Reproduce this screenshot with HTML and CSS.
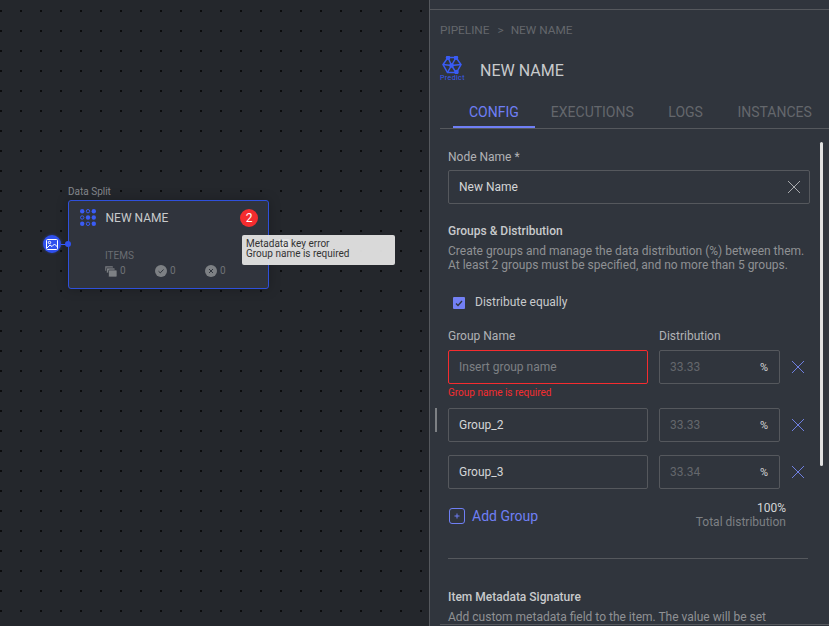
FILE: index.html
```html
<!DOCTYPE html>
<html lang="en">
<head>
    <meta charset="UTF-8">
    <meta name="viewport" content="width=device-width, initial-scale=1.0">
    <title>Pipeline - New Name</title>
    <link rel="stylesheet" href="styles.css">
</head>
<body>
    <div class="canvas">
        <div class="node-label">Data Split</div>
        <div class="node">
            <div class="node-head">
                <svg class="node-icon" width="16" height="17" viewBox="0 0 16 17" fill="#3a5cf5" stroke="#3a5cf5">
                    <circle cx="2.200" cy="2.200" r="2.200" stroke="none"/>
                    <circle cx="8" cy="2.200" r="1.700" fill="none" stroke-width="1"/>
                    <circle cx="13.800" cy="2.200" r="2.200" stroke="none"/>
                    <circle cx="2.200" cy="8.500" r="1.700" fill="none" stroke-width="1"/>
                    <circle cx="8" cy="8.500" r="2.200" stroke="none"/>
                    <circle cx="13.800" cy="8.500" r="2.200" stroke="none"/>
                    <circle cx="2.200" cy="14.800" r="2.200" stroke="none"/>
                    <circle cx="8" cy="14.800" r="1.700" fill="none" stroke-width="1"/>
                    <circle cx="13.800" cy="14.800" r="2.200" stroke="none"/>
                </svg>
                <span class="node-name">NEW NAME</span>
                <span class="node-badge">2</span>
            </div>
            <div class="node-items">ITEMS</div>
            <div class="node-stats">
                <span class="stat">
                    <svg width="12" height="11" viewBox="0 0 12 11" fill="#7d8084">
                        <rect x="0" y="0" width="8" height="5" rx="1" opacity=".7"/>
                        <rect x="1.500" y="2" width="8.500" height="5" rx="1" stroke="#30353d" stroke-width=".7"/>
                        <rect x="3.500" y="4" width="8.500" height="7" rx="1" stroke="#30353d" stroke-width=".7"/>
                    </svg>
                    0
                </span>
                <span class="stat">
                    <svg width="12" height="12" viewBox="0 0 12 12">
                        <circle cx="6" cy="6" r="6" fill="#7d8084"/>
                        <path d="M3.500 6.200l1.800 1.700 3.200-3.400" fill="none" stroke="#30353d" stroke-width="1"/>
                    </svg>
                    0
                </span>
                <span class="stat">
                    <svg width="12" height="12" viewBox="0 0 12 12">
                        <circle cx="6" cy="6" r="6" fill="#7d8084"/>
                        <path d="M4 4l4 4M8 4l-4 4" fill="none" stroke="#30353d" stroke-width="1"/>
                    </svg>
                    0
                </span>
            </div>
        </div>
        <div class="port-in">
            <svg width="12" height="11" viewBox="0 0 12 11" fill="none" stroke="#fff" stroke-width="1">
                <rect x=".5" y=".5" width="11" height="10" rx="1"/>
                <circle cx="3.500" cy="3.500" r="1.200"/>
                <path d="M1 9l3-3 2 1.500 2.500-2.500 3 3"/>
            </svg>
        </div>
        <div class="port-line"></div>
        <div class="port-dot"></div>
        <div class="port-out"></div>
        <div class="tooltip">Metadata key error<br>Group name is required</div>
    </div>

    <div class="panel">
        <div class="breadcrumb"><span>PIPELINE</span><span class="crumb-sep">&gt;</span><span>NEW NAME</span></div>
        <div class="panel-title">
            <div class="logo">
                <svg width="20" height="18" viewBox="0 0 20 18" fill="none" stroke="#3a5cf5" stroke-width="1.500">
                    <path d="M6 1.500h8l5 7-4.500 8h-9L1 8.500z"/>
                    <path d="M6 1.500l3.500 8 4.500 7M14 1.500l-4.500 8-4 7M1 8.500l8.500 1L19 8.500"/>
                    <circle cx="6" cy="1.800" r="1.500" fill="#3a5cf5"/>
                    <circle cx="14" cy="1.800" r="1.500" fill="#3a5cf5"/>
                    <circle cx="9.500" cy="9.500" r="1.600" fill="#3a5cf5"/>
                    <circle cx="14.500" cy="16" r="1.500" fill="#3a5cf5"/>
                </svg>
                <span class="logo-text">Predict</span>
            </div>
            <span class="title-text">NEW NAME</span>
        </div>
        <div class="tabs">
            <span class="tab active">CONFIG</span>
            <span class="tab">EXECUTIONS</span>
            <span class="tab">LOGS</span>
            <span class="tab">INSTANCES</span>
        </div>

        <div class="form">
            <label class="label name-label">Node Name *</label>
            <div class="field name-field">
                <span class="value">New Name</span>
                <svg width="14" height="14" viewBox="0 0 14 14" stroke="#a9abae" stroke-width="1"><path d="M1 1l12 12M13 1L1 13"/></svg>
            </div>

            <h2 class="heading groups-heading">Groups &amp; Distribution</h2>
            <p class="desc">Create groups and manage the data distribution (%) between them.<br>At least 2 groups must be specified, and no more than 5 groups.</p>

            <div class="check-row">
                <span class="checkbox">
                    <svg width="8" height="7" viewBox="0 0 8 7" fill="none" stroke="#30353d" stroke-width="1.300"><path d="M1 3.500l2 2 4-4.500"/></svg>
                </span>
                <span class="check-label">Distribute equally</span>
            </div>

            <div class="group-grid">
                <span class="label">Group Name</span>
                <span class="label">Distribution</span>
                <span></span>

                <div class="field error"><span class="placeholder">Insert group name</span></div>
                <div class="field dist"><span class="dist-value">33.33</span><span class="pct">%</span></div>
                <svg class="remove" width="14" height="14" viewBox="0 0 14 14" stroke="#6f7fe0" stroke-width="1"><path d="M1 1l12 12M13 1L1 13"/></svg>
                <div class="error-text">Group name is required</div>

                <div class="field"><span class="value">Group_2</span></div>
                <div class="field dist"><span class="dist-value">33.33</span><span class="pct">%</span></div>
                <svg class="remove" width="14" height="14" viewBox="0 0 14 14" stroke="#6f7fe0" stroke-width="1"><path d="M1 1l12 12M13 1L1 13"/></svg>
                <div class="row-gap"></div>

                <div class="field"><span class="value">Group_3</span></div>
                <div class="field dist"><span class="dist-value">33.34</span><span class="pct">%</span></div>
                <svg class="remove" width="14" height="14" viewBox="0 0 14 14" stroke="#6f7fe0" stroke-width="1"><path d="M1 1l12 12M13 1L1 13"/></svg>
            </div>

            <div class="add-row">
                <div class="add-group">
                    <svg width="16" height="16" viewBox="0 0 16 16" fill="none" stroke="#6f7ff5" stroke-width="1">
                        <rect x=".5" y=".5" width="15" height="15" rx="2.500"/>
                        <path d="M8 5.500v5M5.500 8h5"/>
                    </svg>
                    <span>Add Group</span>
                </div>
                <div class="total">
                    <div class="total-num">100%</div>
                    <div class="total-label">Total distribution</div>
                </div>
            </div>

            <div class="divider"></div>

            <h2 class="heading meta-heading">Item Metadata Signature</h2>
            <p class="desc">Add custom metadata field to the item. The value will be set</p>
        </div>

        <div class="drag-handle"></div>
        <div class="scrollbar"></div>
        <div class="bottom-line"></div>
    </div>
</body>
</html>
```

FILE: styles.css
```css
* {
    box-sizing: border-box;
}
body {
    margin: 0;
    display: flex;
    height: 626px;
    overflow: hidden;
    background: #24272c;
    font-family: Roboto, "Liberation Sans", sans-serif;
    color: #c8cacc;
}

/* canvas */
.canvas {
    position: relative;
    width: 429px;
    flex: none;
    background-color: #24272c;
    background-image: radial-gradient(circle at 1px 1px, #0b0c0e 1px, transparent 1.2px);
    background-size: 20px 20px;
    background-position: 0 10px;
}
.node-label {
    position: absolute;
    left: 68px;
    top: 186px;
    font-size: 10px;
    line-height: 12px;
    color: #85888c;
}
.node {
    position: absolute;
    left: 68px;
    top: 200px;
    width: 201px;
    height: 89px;
    padding: 8px 10px 0 11px;
    background: #30343d;
    border: 1.5px solid #2f50dc;
    border-radius: 3px;
    box-shadow: 0 0 12px rgba(0, 0, 0, 0.25);
}
.node-head {
    display: flex;
    align-items: center;
    height: 17px;
}
.node-name {
    margin-left: 9.500px;
    font-size: 12px;
    color: #c8cacc;
}
.node-badge {
    margin-left: auto;
    width: 18px;
    height: 18px;
    border-radius: 50%;
    background: #f52c2f;
    color: #fff;
    font-size: 12px;
    line-height: 18px;
    text-align: center;
}
.node-items {
    margin: 24px 0 0 25px;
    font-size: 10px;
    line-height: 12px;
    color: #6a6d72;
}
.node-stats {
    display: flex;
    margin: 3px 0 0 25px;
}
.stat {
    display: flex;
    align-items: center;
    gap: 3px;
    width: 50px;
    font-size: 10px;
    line-height: 12px;
    color: #6f7276;
}
.port-in {
    position: absolute;
    left: 43px;
    top: 235px;
    width: 18px;
    height: 18px;
    display: flex;
    align-items: center;
    justify-content: center;
    border-radius: 50%;
    background: #2f50ee;
    box-shadow: 0 0 3px rgba(58, 92, 245, 0.5);
}
.port-line {
    position: absolute;
    left: 61px;
    top: 244px;
    width: 7px;
    height: 1px;
    background: #3a5cf5;
}
.port-dot {
    position: absolute;
    left: 65px;
    top: 241px;
    width: 6px;
    height: 6px;
    border-radius: 50%;
    background: #2f50ee;
}
.port-out {
    position: absolute;
    left: 278px;
    top: 239px;
    width: 12px;
    height: 10px;
    border-radius: 2px;
    background: #fff;
}
.tooltip {
    position: absolute;
    left: 242px;
    top: 235px;
    width: 153px;
    height: 30px;
    padding: 4px 4px;
    background: rgba(228, 228, 228, 0.94);
    border-radius: 2px;
    font-size: 10px;
    line-height: 10px;
    color: #333;
}

/* side panel */
.panel {
    position: relative;
    flex: 1;
    height: 626px;
    padding: 10px 0 0 10px;
    overflow: hidden;
    background: #30353d;
    border-left: 1px solid #55585d;
}
.panel::before {
    content: "";
    position: absolute;
    top: 9px;
    left: 0;
    right: 0;
    height: 1px;
    background: #55585d;
}
.breadcrumb {
    display: flex;
    height: 38px;
    padding-top: 13px;
    font-size: 11.800px;
    line-height: 14px;
    color: #64676c;
}
.crumb-sep {
    margin: 0 7px 0 8px;
}
.panel-title {
    display: flex;
    align-items: center;
    height: 44px;
}
.logo {
    position: relative;
    width: 40px;
    height: 28px;
    padding-left: 2px;
}
.logo svg {
    display: block;
}
.logo-text {
    display: block;
    margin: 0 0 0 -2px;
    font-size: 7px;
    line-height: 8px;
    letter-spacing: 0.400px;
    color: #3a5cf5;
}
.title-text {
    font-size: 16px;
    color: #c8cacc;
}
.tabs {
    display: flex;
    height: 37px;
    padding-top: 12px;
    border-bottom: 1px solid #55585d;
}
.tab {
    font-size: 14px;
    line-height: 16px;
    color: #64676c;
    white-space: nowrap;
}
.tab:nth-child(1) {
    margin: 0 32px 0 29px;
}
.tab:nth-child(2), .tab:nth-child(3) {
    margin-right: 34.500px;
}
.tab.active {
    position: relative;
    color: #6f7ff5;
}
.tab.active::after {
    content: "";
    position: absolute;
    left: -16px;
    right: -16px;
    top: 22px;
    height: 2px;
    background: #6f7ff5;
}

/* form */
.form {
    padding: 0 0 0 8px;
    width: 370px;
}
.label {
    display: block;
    font-size: 12px;
    line-height: 14px;
    color: #b0b2b5;
}
.name-label {
    margin-top: 21px;
}
.field {
    display: flex;
    align-items: center;
    height: 34px;
    padding: 0 10px;
    border: 1px solid #55585d;
    border-radius: 2px;
    font-size: 12px;
}
.name-field {
    justify-content: space-between;
    width: 362px;
    margin-top: 6px;
    padding-right: 8px;
}
.value {
    color: #d4d5d7;
}
.placeholder {
    color: #7d8084;
}
.heading {
    margin: 0;
    font-size: 12px;
    font-weight: 500;
    line-height: 14px;
    color: #c8cacc;
}
.groups-heading {
    margin-top: 20px;
}
.desc {
    margin: 6px 0 0;
    font-size: 12px;
    line-height: 14px;
    color: #8f9194;
    white-space: nowrap;
}
.check-row {
    display: flex;
    align-items: center;
    gap: 10px;
    margin: 22px 0 0 5px;
    height: 16px;
}
.checkbox {
    display: flex;
    align-items: center;
    justify-content: center;
    width: 12px;
    height: 12px;
    margin-top: 2px;
    border-radius: 1px;
    background: #7380f5;
}
.check-label {
    font-size: 12px;
    color: #c8cacc;
}
.group-grid {
    display: grid;
    grid-template-columns: 200px 121px 14px;
    column-gap: 11px;
    align-items: center;
    margin-top: 19px;
}
.group-grid .label {
    margin-bottom: 7px;
}
.group-grid .field.error {
    border-color: #f52c2f;
}
.error-text {
    grid-column: 1 / -1;
    height: 24px;
    padding-top: 3px;
    font-size: 10px;
    line-height: 12px;
    color: #f52c2f;
}
.row-gap {
    grid-column: 1 / -1;
    height: 13px;
}
.dist {
    justify-content: space-between;
    padding-right: 11px;
}
.dist-value {
    color: #64676c;
}
.pct {
    font-size: 11px;
    color: #d4d5d7;
}
.add-row {
    display: flex;
    justify-content: space-between;
    width: 338px;
    height: 57px;
    margin-top: 12px;
}
.add-group {
    display: flex;
    align-items: center;
    gap: 7px;
    height: 26px;
    margin-left: 1px;
    padding-top: 3px;
    font-size: 14px;
    color: #6f7ff5;
}
.total {
    text-align: right;
    font-size: 12px;
    line-height: 14px;
}
.total-num {
    color: #d4d5d7;
}
.total-label {
    color: #7d8084;
}
.divider {
    width: 360px;
    height: 1px;
    background: #55585d;
}
.meta-heading {
    margin-top: 31px;
}
.drag-handle {
    position: absolute;
    left: 5px;
    top: 408px;
    width: 2px;
    height: 24px;
    background: #7d8084;
}
.scrollbar {
    position: absolute;
    left: 390px;
    top: 142px;
    width: 3px;
    height: 324px;
    border-radius: 2px;
    background: #e0e0e0;
}
.bottom-line {
    position: absolute;
    left: 10px;
    right: 0;
    top: 624px;
    height: 1px;
    background: #55585d;
}
```
